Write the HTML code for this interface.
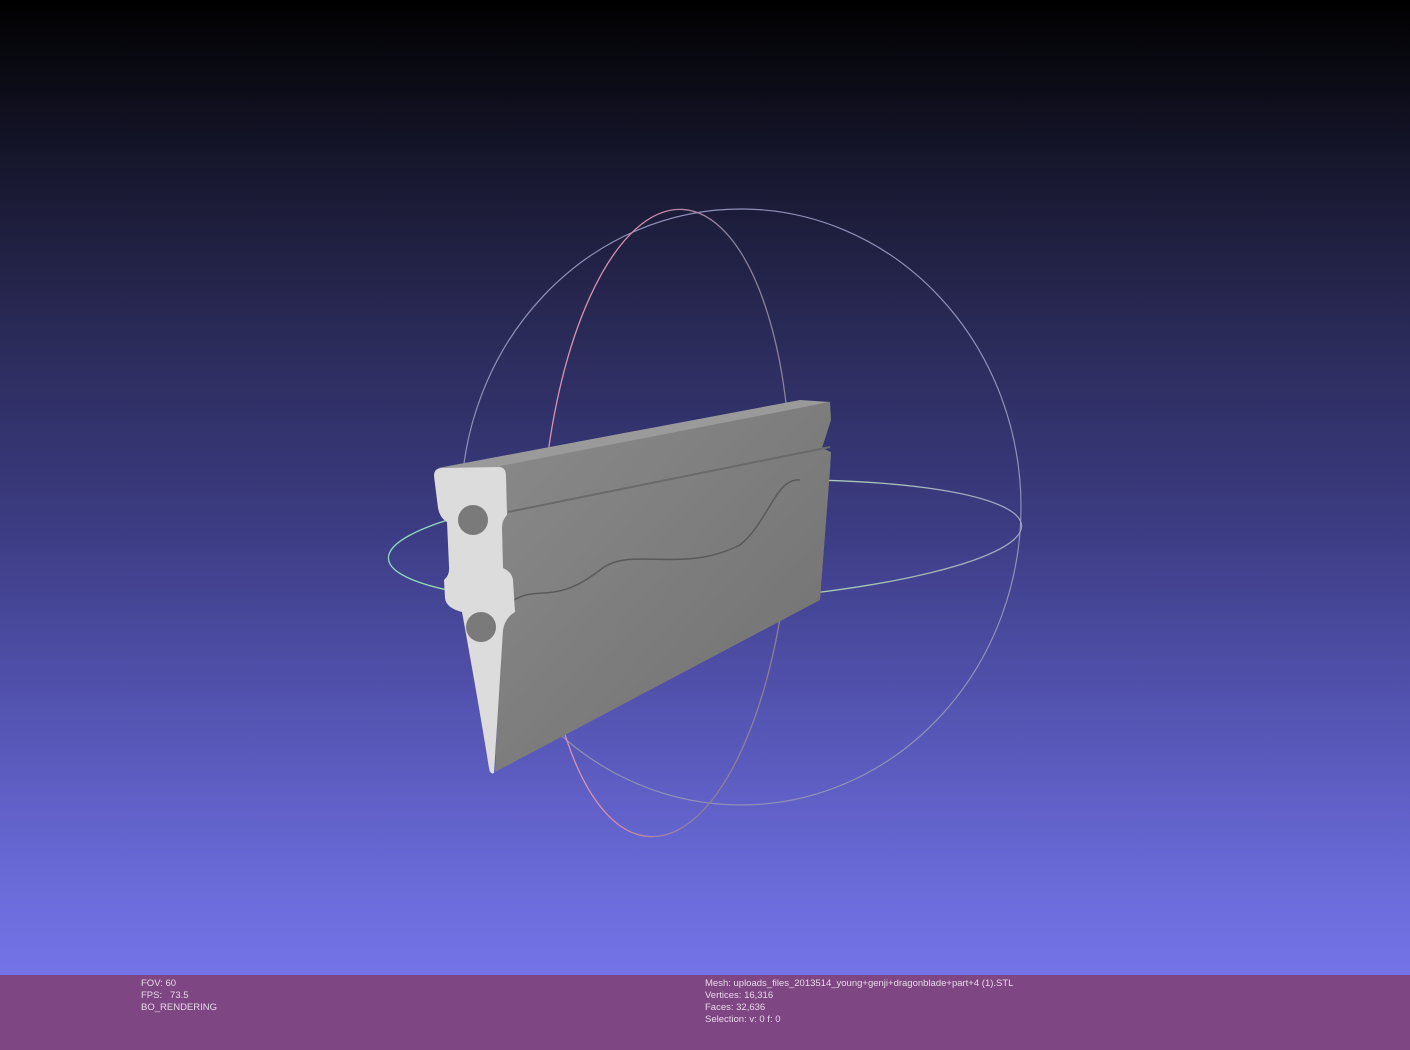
<!DOCTYPE html>
<html><head><style>
html,body{margin:0;padding:0;width:1410px;height:1050px;overflow:hidden}
body{position:relative;background:linear-gradient(#000 0px,#15152a 150px,#2c2c5c 350px,#3c3c84 530px,#5555b4 720px,#6a6ad8 880px,#7474e8 975px)}
.bar{position:absolute;left:0;top:975px;width:1410px;height:75px;background:#7e4682;font:9.5px "Liberation Sans",sans-serif;color:#e8d8ea;line-height:12px}
.l{position:absolute;left:141px;top:3px}.r{position:absolute;left:705px;top:3px}
svg{position:absolute;left:0;top:0}
</style></head><body>
<svg width="1410" height="975" viewBox="0 0 1410 975">
<defs>
<linearGradient id="side" x1="0" y1="0" x2="1" y2="1"><stop offset="0" stop-color="#8a8a8a"/><stop offset="1" stop-color="#707070"/></linearGradient>
<linearGradient id="pk" x1="540" y1="0" x2="792" y2="0" gradientUnits="userSpaceOnUse"><stop offset="0.3" stop-color="#d890b0"/><stop offset="0.7" stop-color="#8a8098"/></linearGradient>
<linearGradient id="gr" x1="388" y1="0" x2="1022" y2="0" gradientUnits="userSpaceOnUse"><stop offset="0" stop-color="#90d8c0"/><stop offset="0.5" stop-color="#b0e8b0"/><stop offset="1" stop-color="#a0a0c0"/></linearGradient>
</defs>
<ellipse cx="741" cy="507" rx="280" ry="298" fill="none" stroke="#9090b8" stroke-width="1.2"/>
<ellipse cx="666" cy="523" rx="124" ry="314" transform="rotate(3 666 523)" fill="none" stroke="url(#pk)" stroke-width="1.3"/>
<ellipse cx="705" cy="542" rx="317" ry="60" transform="rotate(-3 705 542)" fill="none" stroke="url(#gr)" stroke-width="1.3"/>
<polygon points="438,468 800,400 830,402 505,468" fill="#9a9a9a"/>
<polygon points="500,466 830,402 831,420 822,448 831,452 830,470 820,600 495,772 500,650" fill="url(#side)"/>
<path d="M508,512 L830,447" stroke="#6a6a6a" stroke-width="2" fill="none"/>
<path d="M514,600 C540,585 555,605 600,570 C630,545 680,575 740,545 C770,520 775,478 800,480" stroke="#5a5a5a" stroke-width="1.5" fill="none"/>
<path d="M434,476 Q434,468 442,468 L500,467 Q506,468 506,476 L507,515 Q502,520 502,528 L503,568 Q512,572 513,580 L515,612 Q505,618 503,630 L494,773 Q490,775 489,768 Q478,700 462,612 Q446,608 445,598 L444,580 Q450,575 449,566 L447,522 Q440,518 438,508 Z" fill="#dcdcdc"/>
<circle cx="473" cy="520" r="15" fill="#7a7a7a"/>
<circle cx="481" cy="627" r="15" fill="#7a7a7a"/>
</svg>
<div class="bar"><div class="l">FOV: 60<br>FPS: &nbsp;&nbsp;73.5<br>BO_RENDERING</div>
<div class="r">Mesh: uploads_files_2013514_young+genji+dragonblade+part+4 (1).STL<br>Vertices: 16,316<br>Faces: 32,636<br>Selection: v: 0 f: 0</div></div>
</body></html>
